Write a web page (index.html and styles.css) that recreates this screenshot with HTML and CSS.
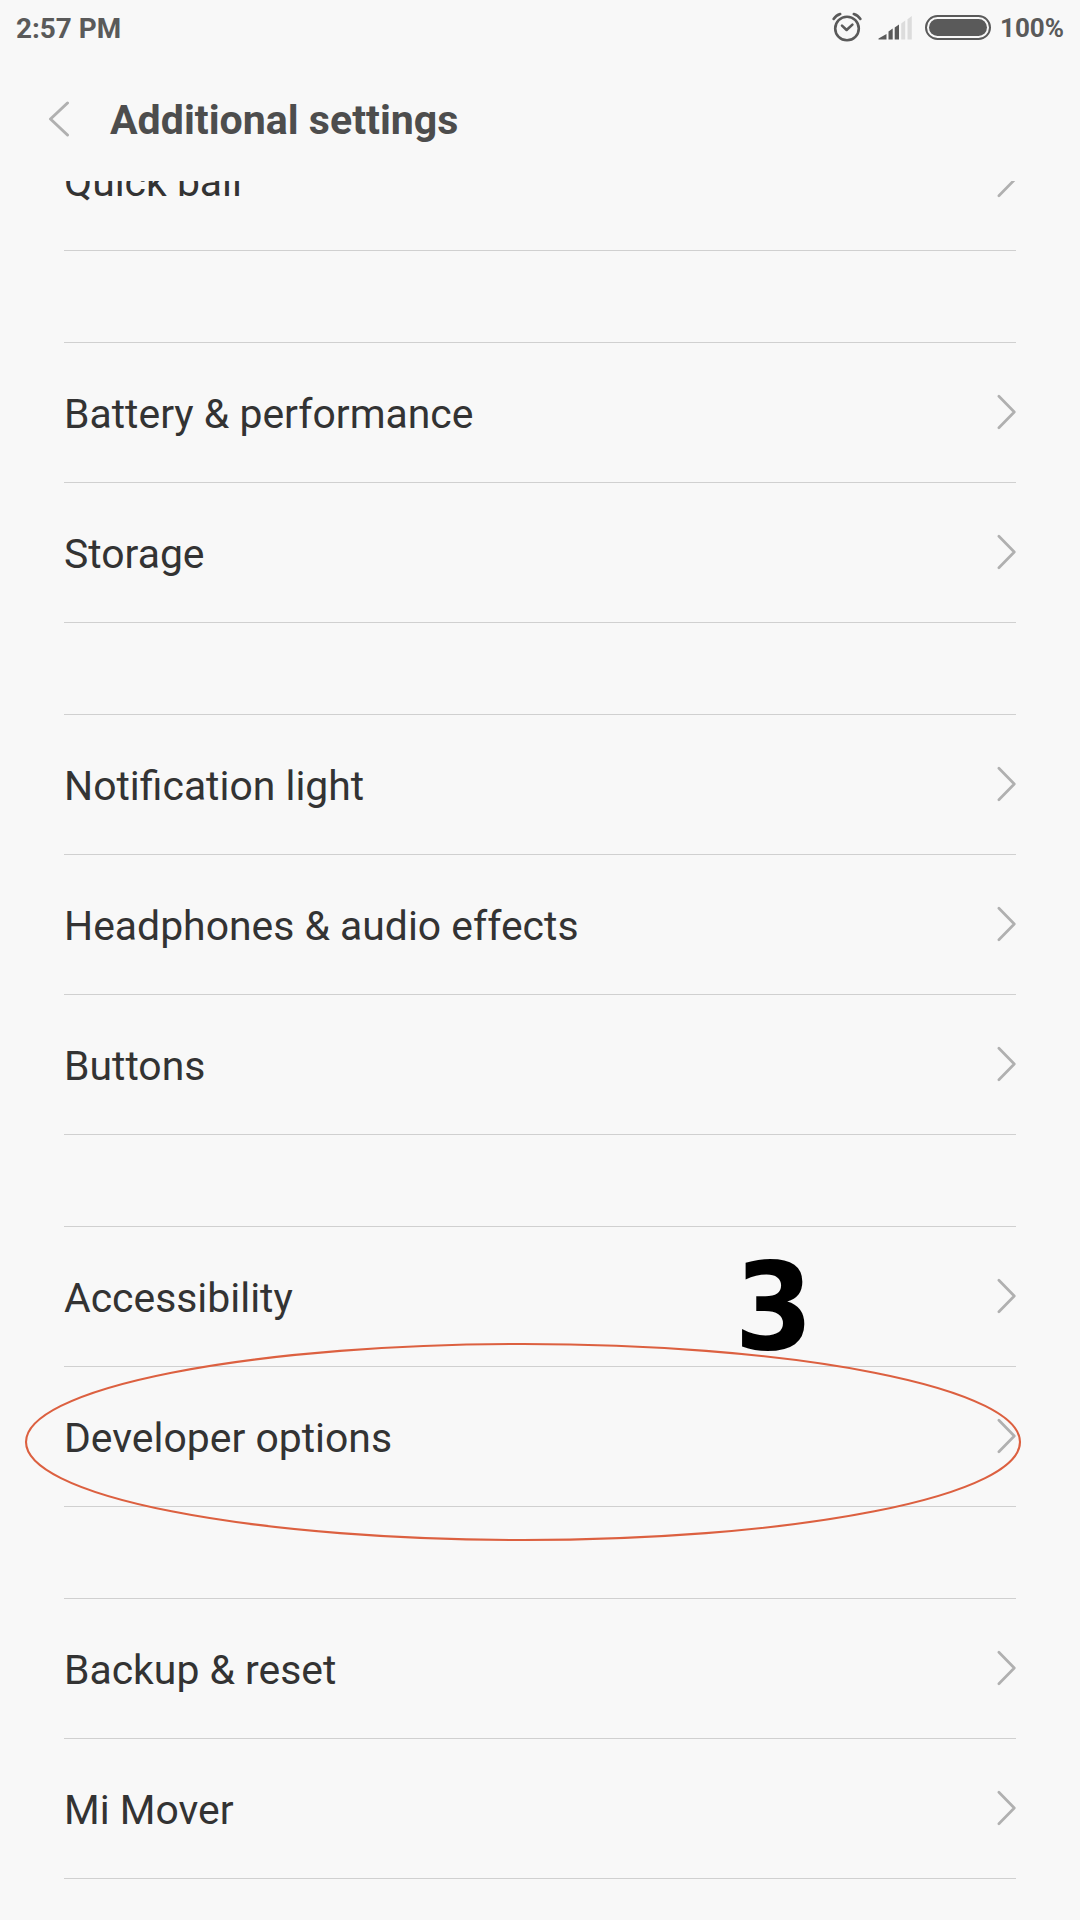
FILE: index.html
```html
<!DOCTYPE html>
<html lang="en">
<head>
<meta charset="utf-8">
<title>Additional settings</title>
<link rel="stylesheet" href="styles.css">
</head>
<body>
<svg class="defs" aria-hidden="true">
  <symbol id="chevron" viewBox="0 0 20 36"><path d="M2.9 2.3 18.3 18 2.9 33.7"/></symbol>
</svg>
<div class="screen">
  <header class="status">
    <span class="clock">2:57 PM</span>
    <div class="indicators">
      <svg class="alarm" viewBox="0 0 32 30" width="32" height="30">
        <circle cx="16" cy="16.5" r="11.8"/>
        <path d="M11 13.6 15.6 18 21.4 12.6M2.6 7Q5 3.2 9.2 2M29.4 7Q27 3.2 22.8 2"/>
      </svg>
      <svg class="signal" viewBox="0 0 35 25" width="35" height="25">
        <path d="M.5 23.5V22.5L8.5 18V23.5ZM10.5 23.5V15.6L14.7 12.6V23.5ZM16.7 23.5V11.5L21 8.6V23.5Z"/>
        <path class="weak" d="M23.2 23.5V7.6L27.2 4.5V23.5ZM29.5 23.5V3.2L33.8 0V23.5Z"/>
      </svg>
      <span class="battery"><span class="charge"></span></span>
      <span class="percent">100%</span>
    </div>
  </header>
  <div class="titlebar">
    <svg class="back" viewBox="0 0 22 36" width="22" height="36"><path d="M19.5 2 2.5 18 19.5 34"/></svg>
    <h1>Additional settings</h1>
  </div>
  <main class="scroller">
    <ul class="group partial">
      <li><span>Quick ball</span><svg class="chevron"><use href="#chevron"/></svg></li>
    </ul>
    <ul class="group">
      <li><span>Battery &amp; performance</span><svg class="chevron"><use href="#chevron"/></svg></li>
      <li><span>Storage</span><svg class="chevron"><use href="#chevron"/></svg></li>
    </ul>
    <ul class="group">
      <li><span>Notification light</span><svg class="chevron"><use href="#chevron"/></svg></li>
      <li><span>Headphones &amp; audio effects</span><svg class="chevron"><use href="#chevron"/></svg></li>
      <li><span>Buttons</span><svg class="chevron"><use href="#chevron"/></svg></li>
    </ul>
    <ul class="group">
      <li><span>Accessibility</span><svg class="chevron"><use href="#chevron"/></svg></li>
      <li><span>Developer options</span><svg class="chevron"><use href="#chevron"/></svg></li>
    </ul>
    <ul class="group">
      <li><span>Backup &amp; reset</span><svg class="chevron"><use href="#chevron"/></svg></li>
      <li><span>Mi Mover</span><svg class="chevron"><use href="#chevron"/></svg></li>
    </ul>
  </main>
  <svg class="ring" viewBox="0 0 1000 200" width="1000" height="200"><ellipse cx="500" cy="100" rx="497" ry="98"/></svg>
  <div class="step">3</div>
</div>
</body>
</html>
```
FILE: styles.css
```css
* { box-sizing: border-box; }
body { margin: 0; background: #f8f8f8; font-family: Roboto, "Noto Sans", sans-serif; }
.defs { position: absolute; width: 0; height: 0; }
.screen {
  position: relative;
  width: 1080px;
  height: 1920px;
  overflow: hidden;
  display: flex;
  flex-direction: column;
  color: #333;
}
svg { flex: none; fill: none; stroke-linecap: round; stroke-linejoin: round; }

.status {
  height: 56px;
  padding: 0 16px;
  display: flex;
  align-items: center;
  justify-content: space-between;
  color: #5a5a5a;
  font-weight: 700;
}
.clock { font-size: 27.9px; line-height: 56px; padding-top: 1px; }
.indicators { display: flex; align-items: center; height: 54px; }
.alarm { stroke: #5a5a5a; stroke-width: 2.6; margin: 0 15px 2px 0; }
.signal { fill: #5a5a5a; margin-right: 12px; }
.signal .weak { fill: #dcdcdc; }
.battery {
  width: 66px;
  height: 25px;
  padding: 2px;
  margin: 0 9px 1px 0;
  border: 2px solid #5a5a5a;
  border-radius: 13px;
}
.charge { display: block; height: 17px; border-radius: 9px; background: #5a5a5a; }
.percent { font-size: 26px; }

.titlebar {
  height: 125px;
  padding: 0 48px;
  display: flex;
  align-items: flex-start;
}
.back { margin: 45px 40px 0 0; stroke: #b0b0b0; stroke-width: 3; }
h1 { margin: 39px 0 0; font-size: 41.1px; line-height: 50px; font-weight: 700; color: #4d4d4d; }

.scroller { flex: 1; padding: 0 64px; overflow: hidden; }
.group { list-style: none; margin: 0 0 91px; padding: 0; border-top: 1px solid #d0d0d0; }
.partial { margin-top: -71px; }
.group li {
  height: 140px;
  border-bottom: 1px solid #d0d0d0;
  display: flex;
  align-items: center;
  justify-content: space-between;
  font-size: 40.9px;
}
.group li span { padding-top: 2px; }
.chevron { width: 20px; height: 36px; margin-bottom: 1px; stroke: #b0b0b0; stroke-width: 2.7; }

/* annotation drawn over the list */
.ring {
  position: absolute;
  left: 23px;
  top: 1342px;
  stroke: #dc6040;
  stroke-width: 2.1;
}
.step {
  position: absolute;
  left: 736px;
  top: 1238px;
  font: 700 121px/140px "DejaVu Sans Condensed", "DejaVu Sans", sans-serif;
  color: #000;
  transform: scaleX(1.04);
}
```
